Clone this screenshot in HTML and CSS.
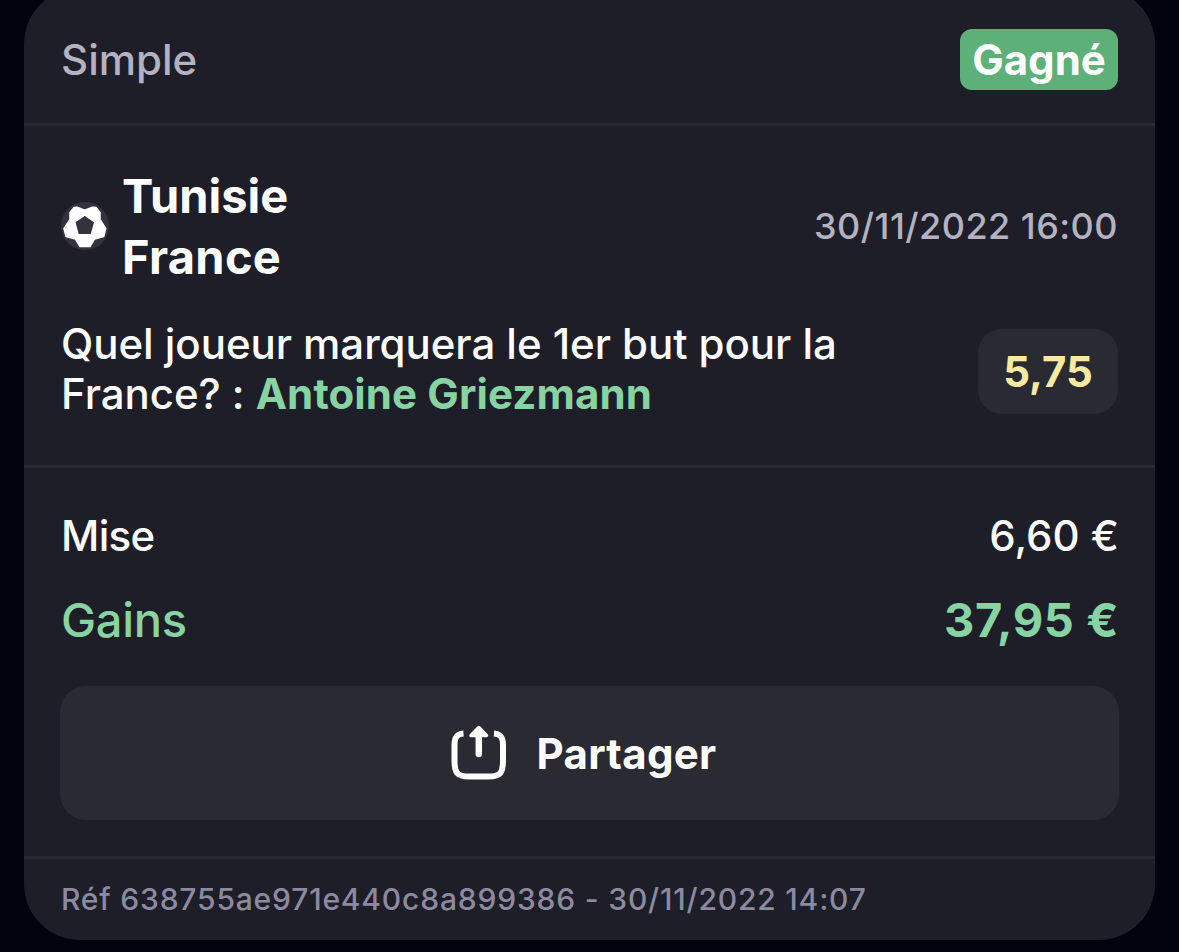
FILE: index.html
```html
<!DOCTYPE html>
<html lang="fr">

<head>
    <meta charset="UTF-8">
    <meta name="viewport" content="width=device-width, initial-scale=1.0">
    <title>Pari simple</title>
    <link rel="stylesheet" href="styles.css">
</head>

<body>
    <main class="ticket">
        <header class="ticket-header">
            <span class="bet-type">Simple</span>
            <span class="status">Gagné</span>
        </header>

        <section class="bet">
            <div class="match">
                <svg class="sport-icon" viewBox="0 0 48 48">
                    <circle cx="24" cy="24" r="24" fill="#33323e" />
                    <path d="M9 10.500 L13 5.500 L16 5.200 L23.700 8.300 L31.500 5.200 L35 5.500 L39 10.500 L39 17.500 L44.700 26.500 L42.700 34.500 L33.500 37 L29 44.500 L19 44.500 L14.500 37 L5 34.500 L3 26.500 L9 17.500 Z" fill="#fff" stroke="#fff" stroke-width="1.500" stroke-linejoin="round" />
                    <path d="M23.700 14 L33 20.300 L29.800 32 L17.700 32 L14.500 20.300 Z" fill="#33323e" />
                </svg>
                <div class="teams">
                    <div class="team">Tunisie</div>
                    <div class="team team-away">France</div>
                </div>
                <time class="match-date">30/11/2022 16:00</time>
            </div>
            <div class="selection">
                <p class="question"><span class="question-line">Quel joueur marquera le 1er but pour la</span><br>France? : <strong class="pick">Antoine Griezmann</strong></p>
                <span class="odds">5,75</span>
            </div>
        </section>

        <section class="summary">
            <div class="row stake">
                <span class="stake-label">Mise</span>
                <span class="stake-value">6,60 €</span>
            </div>
            <div class="row winnings">
                <span class="winnings-label">Gains</span>
                <span class="winnings-value">37,95 €</span>
            </div>
            <button type="button" class="share-btn">
                <svg class="share-icon" viewBox="0 0 56 56">
                    <path d="M12.500 8.500 C6 9 3.500 12 3.500 20 V35 C3.500 48 6 51.500 18 51.500 H37.500 C49.500 51.500 52 48 52 35 V20 C52 12 49.500 9 43 8.500" fill="none" stroke="#fff" stroke-width="6" />
                    <path d="M27.800 12 V29" fill="none" stroke="#fff" stroke-width="6.500" stroke-linecap="round" />
                    <path d="M27.800 2.500 L35.500 10.500 H20 Z" fill="#fff" stroke="#fff" stroke-width="3.500" stroke-linejoin="round" />
                </svg>
                <span class="share-label">Partager</span>
            </button>
        </section>

        <footer class="reference">
            <span class="reference-text">Réf 638755ae971e440c8a899386 - 30/11/2022 14:07</span>
        </footer>
    </main>
</body>

</html>
```

FILE: styles.css
```css
* {
    box-sizing: border-box;
}

body {
    margin: 0;
    height: 100vh;
    overflow: hidden;
    background-color: #02020e;
    color: #fff;
    font-family: Inter, "Liberation Sans", sans-serif;
    font-size: 42px;
}

.ticket {
    height: 952px;
    margin: -12px 24px 0;
    display: flex;
    flex-direction: column;
    background-color: #1e1e29;
    border-radius: 56px;
    overflow: hidden;
}

.ticket-header {
    height: 138px;
    padding: 8px 37px 0;
    display: flex;
    align-items: center;
    justify-content: space-between;
    border-bottom: 3px solid #292934;
}

.bet-type {
    color: #b4b2c0;
    font-weight: 500;
}

.status {
    width: 158px;
    height: 61px;
    line-height: 61px;
    text-align: center;
    font-weight: 700;
    background-color: #5db078;
    border-radius: 12px;
}

.bet {
    height: 342px;
    padding: 39px 37px 0;
    border-bottom: 3px solid #292934;
}

.match {
    display: flex;
    align-items: center;
}

.sport-icon {
    width: 48px;
    height: 48px;
    margin-right: 13px;
}

.teams {
    font-size: 47px;
    font-weight: 700;
    line-height: 61px;
}

.team-away {
    letter-spacing: 0.3px;
}

.match-date {
    margin-left: auto;
    color: #b4b2c0;
    font-size: 36px;
    font-weight: 500;
    letter-spacing: 0.45px;
}

.selection {
    margin-top: 32px;
    display: flex;
    align-items: center;
    justify-content: space-between;
}

.question {
    margin: 0;
    font-weight: 500;
    line-height: 50px;
    letter-spacing: -0.04px;
    white-space: nowrap;
}

.pick {
    color: #87d3a2;
    font-weight: 700;
    letter-spacing: 0.12px;
}

.odds {
    width: 140px;
    height: 85px;
    margin-top: 4px;
    line-height: 85px;
    text-align: center;
    color: #fbe9a0;
    font-weight: 700;
    background-color: #2a2a33;
    border-radius: 24px;
}

.summary {
    height: 391px;
    padding: 37px 36px 0;
    border-bottom: 3px solid #292934;
}

.row {
    display: flex;
    align-items: center;
    justify-content: space-between;
    padding-left: 1px;
    font-weight: 500;
}

.stake {
    height: 60px;
}

.stake-label {
    letter-spacing: -0.7px;
}

.winnings {
    height: 60px;
    margin-top: 24px;
    color: #87d3a2;
    font-size: 47px;
}

.winnings-label {
    letter-spacing: -0.3px;
}

.winnings-value {
    font-weight: 700;
    letter-spacing: 0.6px;
}

.share-btn {
    width: 100%;
    height: 134px;
    margin-top: 37px;
    padding: 0 11px 0 0;
    display: flex;
    align-items: center;
    justify-content: center;
    gap: 29px;
    color: #fff;
    font: inherit;
    font-weight: 700;
    letter-spacing: 0.3px;
    background-color: #2a2a33;
    border: none;
    border-radius: 26px;
}

.share-icon {
    width: 56px;
    height: 56px;
}

.reference {
    flex: 1;
    padding: 0 37px 2px;
    display: flex;
    align-items: center;
    color: #8d8aa0;
    font-size: 30px;
    font-weight: 500;
    letter-spacing: 0.82px;
}
```
